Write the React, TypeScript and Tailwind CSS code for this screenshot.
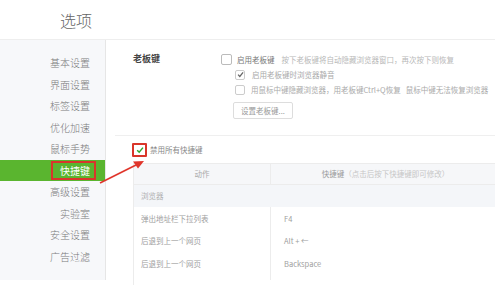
const FONT = { fontFamily: '"Noto Sans CJK SC", "Noto Sans", sans-serif' };

const menu = [
  "基本设置",
  "界面设置",
  "标签设置",
  "优化加速",
  "鼠标手势",
  "快捷键",
  "高级设置",
  "实验室",
  "安全设置",
  "广告过滤",
];

const rows = [
  ["弹出地址栏下拉列表", "F4"],
  ["后退到上一个网页", "Alt + ←"],
  ["后退到上一个网页", "Backspace"],
];

function Check({ color, size = 8 }: { color: string; size?: number }) {
  return (
    <svg width={size} height={size} viewBox="0 0 10 10">
      <polyline points="1.5,5.2 4,7.8 8.7,2" fill="none" stroke={color} strokeWidth="1.8" />
    </svg>
  );
}

export default function App() {
  return (
    <div className="relative w-[495px] h-[306px] overflow-hidden bg-white" style={FONT}>
      {/* Title */}
      <div className="h-[40px] flex items-center pl-[60px] border-b border-[#eeeeee]">
        <span className="text-[16px] leading-none text-[#666] font-light">选项</span>
      </div>

      <div className="flex">
        {/* Sidebar */}
        <div className="w-[106px] h-[240px] shrink-0 bg-[#f7f8fa] border-r border-[#e6e6e6] pt-[12px]">
          {menu.map((m) =>
            m === "快捷键" ? (
              <div key={m} className="h-[21.5px] bg-[#5ab52f] flex items-center justify-end pr-[9px]">
                <span className="border-2 border-[#d9362b] pl-[7px] pr-[4px] text-[10px] leading-[15px] text-white">
                  {m}
                </span>
              </div>
            ) : (
              <div key={m} className="h-[21.5px] flex items-center justify-end pr-[15px] text-[10px] font-light text-[#7a7a7a]">
                {m}
              </div>
            )
          )}
        </div>

        {/* Main */}
        <div className="flex-1 pl-[27px] pt-[12px] text-[7.5px] leading-none">
          {/* Boss key */}
          <div className="flex">
            <div className="w-[88px] h-[12px] flex items-center text-[9px] font-bold text-[#444]">老板键</div>
            <div className="flex flex-col">
              <div className="h-[15px] flex items-center whitespace-nowrap">
                <span className="w-[11px] h-[11px] border border-[#bbb] rounded-[2px] bg-white mr-[5px]" />
                <span className="text-[#777]">启用老板键</span>
                <span className="text-[#b8b8b8] ml-[7px]">按下老板键将自动隐藏浏览器窗口，再次按下则恢复</span>
              </div>
              <div className="h-[15px] flex items-center pl-[14px] whitespace-nowrap">
                <span className="w-[10px] h-[10px] border border-[#ccc] rounded-[2px] bg-white mr-[7px] flex items-center justify-center">
                  <Check color="#666" size={7} />
                </span>
                <span className="text-[#aaa]">启用老板键时浏览器静音</span>
              </div>
              <div className="h-[15px] flex items-center pl-[14px] whitespace-nowrap">
                <span className="w-[10px] h-[10px] border border-[#ccc] rounded-[2px] bg-white mr-[6px]" />
                <span className="text-[#aaa]">用鼠标中键隐藏浏览器，用老板键Ctrl+Q恢复&nbsp;&nbsp;&nbsp;鼠标中键无法恢复浏览器</span>
              </div>
              <button className="mt-[5px] ml-[12px] w-[60px] h-[17px] border border-[#ddd] rounded-[2px] bg-white text-[#999] text-[7.5px] flex items-center justify-center">
                设置老板键...
              </button>
            </div>
          </div>

          {/* Separator */}
          <div className="mt-[16px] ml-[-18px] border-t border-[#efefef]" />

          {/* Disable all */}
          <div className="h-[27px] flex items-center">
            <span className="w-[15px] h-[14px] border-2 border-[#d9362b] rounded-[1px] bg-white flex items-center justify-center mr-[3px] ml-[-1px]">
              <Check color="#2fa82f" size={8} />
            </span>
            <span className="text-[#888]">禁用所有快捷键</span>
          </div>

          {/* Shortcut table */}
          <div className="w-[367px] border-l border-[#ececec] pb-[5px]">
            <div className="flex h-[22px] bg-[#f6f7f9] border-t border-b border-[#ececec]">
              <div className="w-[137px] border-r border-[#ececec] flex items-center justify-center text-[#aaa]">动作</div>
              <div className="flex-1 flex items-center justify-center">
                <span className="text-[#999]">快捷键</span>
                <span className="text-[#c6c6c6]">（点击后按下快捷键即可修改）</span>
              </div>
            </div>
            <div className="flex h-[22px] bg-[#f4f6f9]">
              <div className="w-[137px] flex items-center pl-[7px] text-[#b0b0b0]">浏览器</div>
            </div>
            {rows.map(([a, k], i) => (
              <div key={i} className="flex h-[22.5px]">
                <div className="w-[137px] border-r border-[#ececec] flex items-center pl-[7px] text-[#a0a0a0]">{a}</div>
                <div className="flex-1 flex items-center pl-[13px] text-[#a0a0a0]">{k}</div>
              </div>
            ))}
            <div className="flex h-[5px]">
              <div className="w-[137px] border-r border-[#ececec]" />
            </div>
          </div>
        </div>
      </div>

      {/* Red annotation arrow */}
      <svg className="absolute left-0 top-0 pointer-events-none" width="495" height="306">
        <line x1="100" y1="183" x2="136" y2="165" stroke="#e0352b" strokeWidth="1.8" />
        <polygon points="144,161 133,161.5 138,168.5" fill="#e0352b" />
      </svg>
    </div>
  );
}
